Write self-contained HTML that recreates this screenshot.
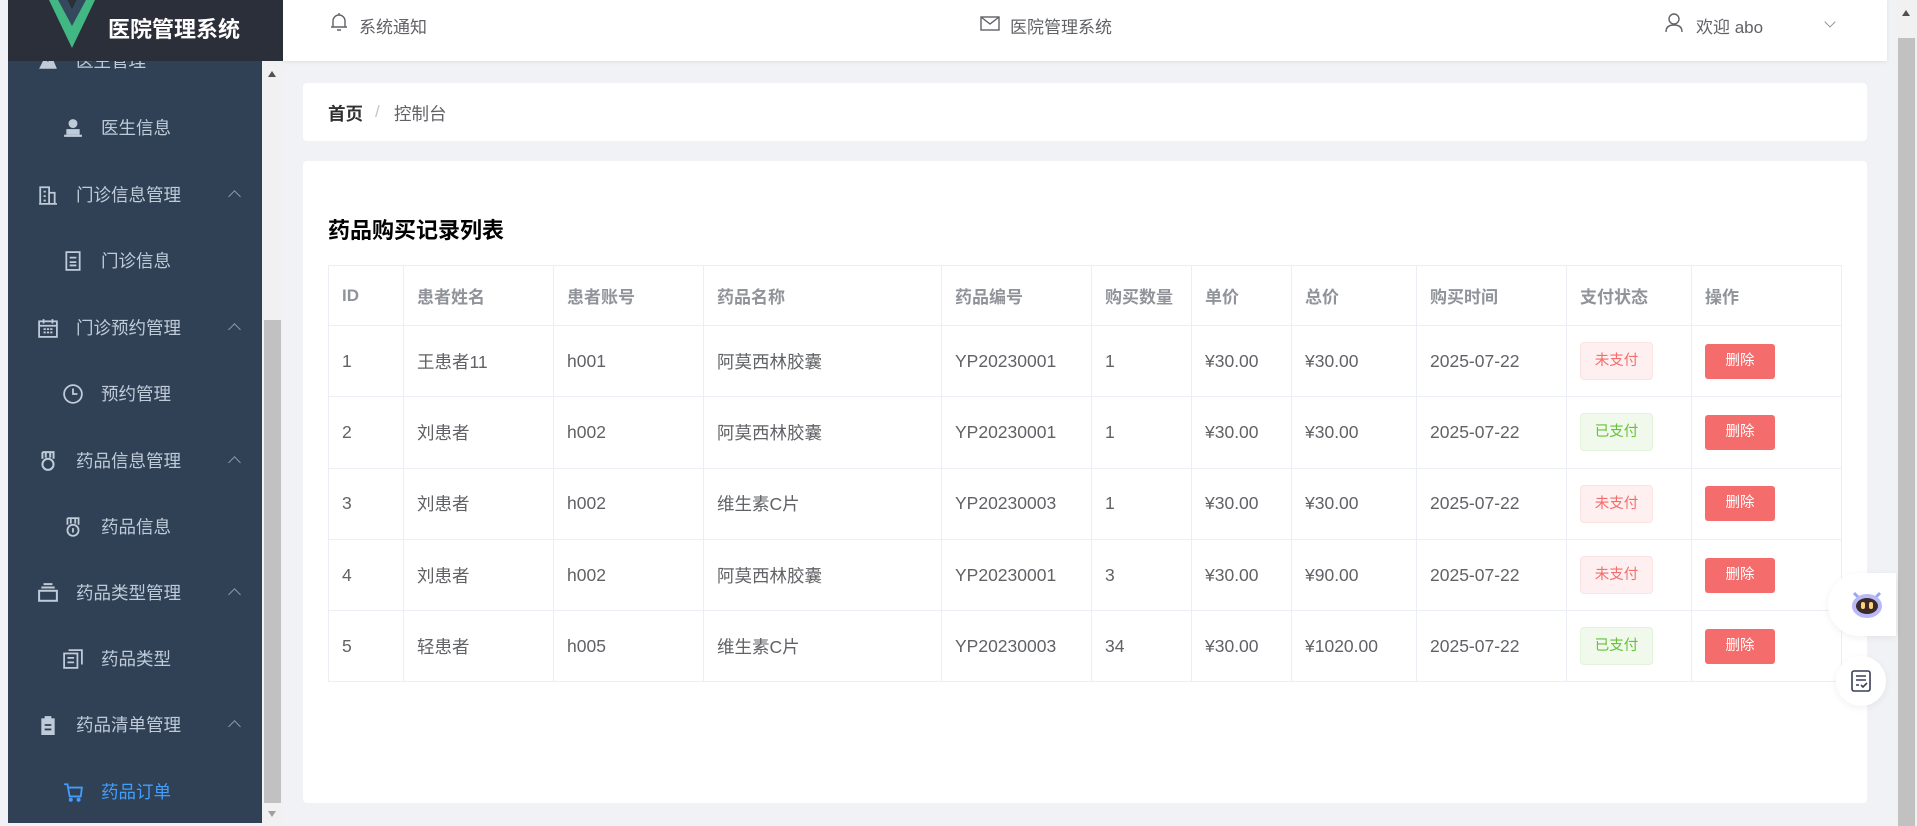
<!DOCTYPE html>
<html><head><meta charset="utf-8">
<style>
*{margin:0;padding:0;box-sizing:border-box}
body{width:1917px;height:826px;overflow:hidden;background:#f0f2f5;font-family:"Liberation Sans","Noto Sans CJK SC",sans-serif;position:relative}
.logo{position:absolute;left:8px;top:0;width:275px;height:61px;background:#2b2f3a;z-index:3}
.logo .t{position:absolute;left:100px;top:12px;color:#fff;font-size:22px;font-weight:bold}
.side{position:absolute;left:8px;top:61px;width:254px;height:762px;background:#304156;overflow:hidden}
.sb{position:absolute;left:262px;top:61px;width:21px;height:762px;background:#f1f1f1}
.sb .th{position:absolute;left:2px;top:259px;width:17px;height:483px;background:#c1c1c1}
.item{position:absolute;left:0;width:254px;height:66px;color:#bfcbd9;font-size:17.5px;line-height:66px}
.item .ic{position:absolute;top:23px;width:20px;height:20px}
.item .tx{position:absolute}
.arr{position:absolute;left:222px;top:30px;width:9px;height:9px;border-left:1.5px solid #8a97a8;border-top:1.5px solid #8a97a8;transform:rotate(45deg)}
.hdr{position:absolute;left:283px;top:0;width:1604px;height:61px;background:#fff;box-shadow:0 1px 4px rgba(0,21,41,.08);color:#606266;font-size:17px}
.hdr span{position:absolute;top:13px}
.psb{position:absolute;left:1896px;top:0;width:21px;height:826px;background:#f1f1f1}
.psb .th{position:absolute;left:2px;top:38px;width:17px;height:788px;background:#c1c1c1}
.card{position:absolute;left:303px;width:1564px;background:#fff;border-radius:4px}
table{position:absolute;left:25px;top:104px;border-collapse:collapse;width:1514px;font-size:17.5px;color:#606266}
td,th{border:1px solid #ebeef5;text-align:left;padding-left:13px;font-weight:normal}
th{height:60px;color:#909399;font-weight:bold;font-size:17px}
td{height:71.3px}
.tag{display:inline-block;width:73px;height:38px;line-height:36px;text-align:center;font-size:14.5px;border-radius:4px;border:1px solid}
.r{background:#fef0f0;border-color:#fde2e2;color:#f56c6c}
.g{background:#f0f9eb;border-color:#e1f3d8;color:#67c23a}
.del{display:inline-block;width:70px;height:35px;line-height:35px;text-align:center;background:#f56c6c;color:#fff;font-size:14.5px;border-radius:3px}
</style></head><body>
<div class="logo">
<svg style="position:absolute;left:41px;top:0" width="46" height="50" viewBox="0 0 46 50"><polygon points="0,0 18,0 23,10 28,0 46,0 23,48" fill="#41b883"/><polygon points="9,0 18,0 23,10 28,0 37,0 23,26" fill="#35495e"/></svg>
<div class="t">医院管理系统</div>
</div>
<div class="side">
<div class="item" style="top:-33px"><svg class="ic" style="left:30px" viewBox="0 0 18 18"><path d="M1 16 L6 6 L9 10 L12 4 L17 16Z" fill="#bfcbd9"/></svg><span class="tx" style="left:68px">医生管理</span></div>
<div class="item" style="top:34px"><svg class="ic" style="left:55px" viewBox="0 0 18 18"><circle cx="9" cy="5" r="4" fill="#bfcbd9"/><rect x="3" y="10" width="12" height="5" fill="#bfcbd9"/><rect x="1" y="15" width="16" height="2" fill="#bfcbd9"/></svg><span class="tx" style="left:93px">医生信息</span></div>
<div class="item" style="top:101px"><svg class="ic" style="left:30px" viewBox="0 0 18 18" fill="none" stroke="#bfcbd9" stroke-width="1.6"><path d="M2 17V2h8v15M10 7h5v10M1 17h16M5 6h2M5 10h2M5 14h2"/></svg><span class="tx" style="left:68px">门诊信息管理</span><i class="arr"></i></div>
<div class="item" style="top:167px"><svg class="ic" style="left:55px" viewBox="0 0 18 18" fill="none" stroke="#bfcbd9" stroke-width="1.6"><rect x="3" y="1" width="12" height="16"/><path d="M6 6h6M6 10h6M6 13h6"/></svg><span class="tx" style="left:93px">门诊信息</span></div>
<div class="item" style="top:234px"><svg class="ic" style="left:30px" viewBox="0 0 18 18" fill="none" stroke="#bfcbd9" stroke-width="1.6"><rect x="1" y="3" width="16" height="14"/><path d="M1 7h16M5 1v4M13 1v4M5 10h2M8 10h2M11 10h2M5 13h2M8 13h2M11 13h2"/></svg><span class="tx" style="left:68px">门诊预约管理</span><i class="arr"></i></div>
<div class="item" style="top:300px"><svg class="ic" style="left:55px" viewBox="0 0 18 18" fill="none" stroke="#bfcbd9" stroke-width="1.6"><circle cx="9" cy="9" r="8"/><path d="M9 4v5h4"/></svg><span class="tx" style="left:93px">预约管理</span></div>
<div class="item" style="top:367px"><svg class="ic" style="left:30px" viewBox="0 0 18 18" fill="none" stroke="#bfcbd9" stroke-width="1.8"><path d="M4 1h10v6M4 1v6M7 1v5M11 1v5"/><circle cx="9" cy="12" r="5"/></svg><span class="tx" style="left:68px">药品信息管理</span><i class="arr"></i></div>
<div class="item" style="top:433px"><svg class="ic" style="left:55px" viewBox="0 0 18 18" fill="none" stroke="#bfcbd9" stroke-width="1.6"><path d="M4 1h10v6M4 1v6M7 1v5M11 1v5"/><circle cx="9" cy="12" r="5"/><path d="M9 10v4"/></svg><span class="tx" style="left:93px">药品信息</span></div>
<div class="item" style="top:499px"><svg class="ic" style="left:30px" viewBox="0 0 18 18" fill="none" stroke="#bfcbd9" stroke-width="1.8"><rect x="1" y="7" width="16" height="9"/><path d="M3 4h12M5 1h8"/></svg><span class="tx" style="left:68px">药品类型管理</span><i class="arr"></i></div>
<div class="item" style="top:565px"><svg class="ic" style="left:55px" viewBox="0 0 18 18" fill="none" stroke="#bfcbd9" stroke-width="1.6"><rect x="1" y="4" width="12" height="13"/><path d="M5 1h12v13M4 8h6M4 12h6"/></svg><span class="tx" style="left:93px">药品类型</span></div>
<div class="item" style="top:631px"><svg class="ic" style="left:30px" viewBox="0 0 18 18"><rect x="3" y="3" width="12" height="15" fill="#bfcbd9"/><rect x="6" y="1" width="6" height="4" fill="#bfcbd9"/><path d="M6 9h6M6 13h6" stroke="#304156" stroke-width="1.6"/></svg><span class="tx" style="left:68px">药品清单管理</span><i class="arr"></i></div>
<div class="item" style="top:698px;color:#409eff"><svg class="ic" style="left:55px" viewBox="0 0 18 18" fill="none" stroke="#409eff" stroke-width="1.6"><path d="M1 2h3l2 11h10l1-8H5"/><circle cx="7" cy="16" r="1"/><circle cx="14" cy="16" r="1"/></svg><span class="tx" style="left:93px">药品订单</span></div>
</div>
<div class="sb"><div style="position:absolute;left:6px;top:10px;border:4.5px solid transparent;border-bottom:6px solid #505050;border-top:0"></div><div class="th"></div><div style="position:absolute;left:6px;top:750px;border:4.5px solid transparent;border-top:6px solid #a0a0a0;border-bottom:0"></div></div>
<div class="hdr">
<svg style="position:absolute;left:47px;top:12px" width="18" height="20" viewBox="0 0 18 20" fill="none" stroke="#606266" stroke-width="1.4"><path d="M3 15V9a6 6 0 0112 0v6M1 15h16M7 18h4M9 1v2"/></svg>
<span style="left:76px">系统通知</span>
<svg style="position:absolute;left:697px;top:16px" width="20" height="15" viewBox="0 0 20 15" fill="none" stroke="#606266" stroke-width="1.4"><rect x="1" y="1" width="18" height="13"/><path d="M1 1l9 7 9-7"/></svg>
<span style="left:727px">医院管理系统</span>
<svg style="position:absolute;left:1382px;top:13px" width="18" height="20" viewBox="0 0 18 20" fill="none" stroke="#606266" stroke-width="1.4"><circle cx="9" cy="6" r="5"/><path d="M1 19c0-5 3-7 8-7s8 2 8 7"/></svg>
<span style="left:1413px">欢迎 abo</span>
<div style="position:absolute;left:1543px;top:18px;width:8px;height:8px;border-right:1.3px solid #909399;border-bottom:1.3px solid #909399;transform:rotate(45deg)"></div>
</div>
<div class="psb"><div style="position:absolute;left:6px;top:10px;border:4.5px solid transparent;border-bottom:6px solid #505050;border-top:0"></div><div class="th"></div></div>
<div class="card" style="top:83px;height:58px"><span style="position:absolute;left:25px;top:18px;font-size:17.5px;color:#303133;font-weight:bold">首页</span><span style="position:absolute;left:72px;top:19px;font-size:17px;color:#c0c4cc">/</span><span style="position:absolute;left:91px;top:18px;font-size:17.5px;color:#606266">控制台</span></div>
<div class="card" style="top:161px;height:642px">
<div style="position:absolute;left:25px;top:52px;font-size:22px;font-weight:bold;color:#000">药品购买记录列表</div>
<table>
<colgroup><col style="width:75px"><col style="width:150px"><col style="width:150px"><col style="width:238px"><col style="width:150px"><col style="width:100px"><col style="width:100px"><col style="width:125px"><col style="width:150px"><col style="width:125px"><col></colgroup>
<tr><th>ID</th><th>患者姓名</th><th>患者账号</th><th>药品名称</th><th>药品编号</th><th>购买数量</th><th>单价</th><th>总价</th><th>购买时间</th><th>支付状态</th><th>操作</th></tr>
<tr><td>1</td><td>王患者11</td><td>h001</td><td>阿莫西林胶囊</td><td>YP20230001</td><td>1</td><td>¥30.00</td><td>¥30.00</td><td>2025-07-22</td><td><span class="tag r">未支付</span></td><td><span class="del">删除</span></td></tr>
<tr><td>2</td><td>刘患者</td><td>h002</td><td>阿莫西林胶囊</td><td>YP20230001</td><td>1</td><td>¥30.00</td><td>¥30.00</td><td>2025-07-22</td><td><span class="tag g">已支付</span></td><td><span class="del">删除</span></td></tr>
<tr><td>3</td><td>刘患者</td><td>h002</td><td>维生素C片</td><td>YP20230003</td><td>1</td><td>¥30.00</td><td>¥30.00</td><td>2025-07-22</td><td><span class="tag r">未支付</span></td><td><span class="del">删除</span></td></tr>
<tr><td>4</td><td>刘患者</td><td>h002</td><td>阿莫西林胶囊</td><td>YP20230001</td><td>3</td><td>¥30.00</td><td>¥90.00</td><td>2025-07-22</td><td><span class="tag r">未支付</span></td><td><span class="del">删除</span></td></tr>
<tr><td>5</td><td>轻患者</td><td>h005</td><td>维生素C片</td><td>YP20230003</td><td>34</td><td>¥30.00</td><td>¥1020.00</td><td>2025-07-22</td><td><span class="tag g">已支付</span></td><td><span class="del">删除</span></td></tr>
</table>
</div>
<div style="position:absolute;left:1828px;top:573px;width:68px;height:63px;background:#fff;border-radius:32px 0 0 32px;box-shadow:0 2px 8px rgba(0,0,0,.06)">
<svg style="position:absolute;left:22px;top:14px" width="34" height="34" viewBox="0 0 34 34"><path d="M4 6l4 4M30 6l-4 4" stroke="#9aa6f0" stroke-width="3"/><ellipse cx="17" cy="19" rx="15" ry="12" fill="#b8b9f6"/><ellipse cx="17" cy="19" rx="11" ry="8" fill="#3a2a2a"/><rect x="11" y="15" width="4" height="7" rx="2" fill="#ffd27a"/><rect x="19" y="15" width="4" height="7" rx="2" fill="#ffd27a"/></svg>
</div>
<div style="position:absolute;left:1836px;top:656px;width:50px;height:50px;background:#fff;border-radius:50%;box-shadow:0 2px 8px rgba(0,0,0,.06)">
<svg style="position:absolute;left:15px;top:14px" width="20" height="22" viewBox="0 0 20 22" fill="none" stroke="#3a3f55" stroke-width="1.6"><rect x="1" y="1" width="18" height="20" rx="2"/><path d="M5 6h10M5 10h10M5 15h3M10 15l2 2 4-4"/></svg>
</div>
</body></html>
